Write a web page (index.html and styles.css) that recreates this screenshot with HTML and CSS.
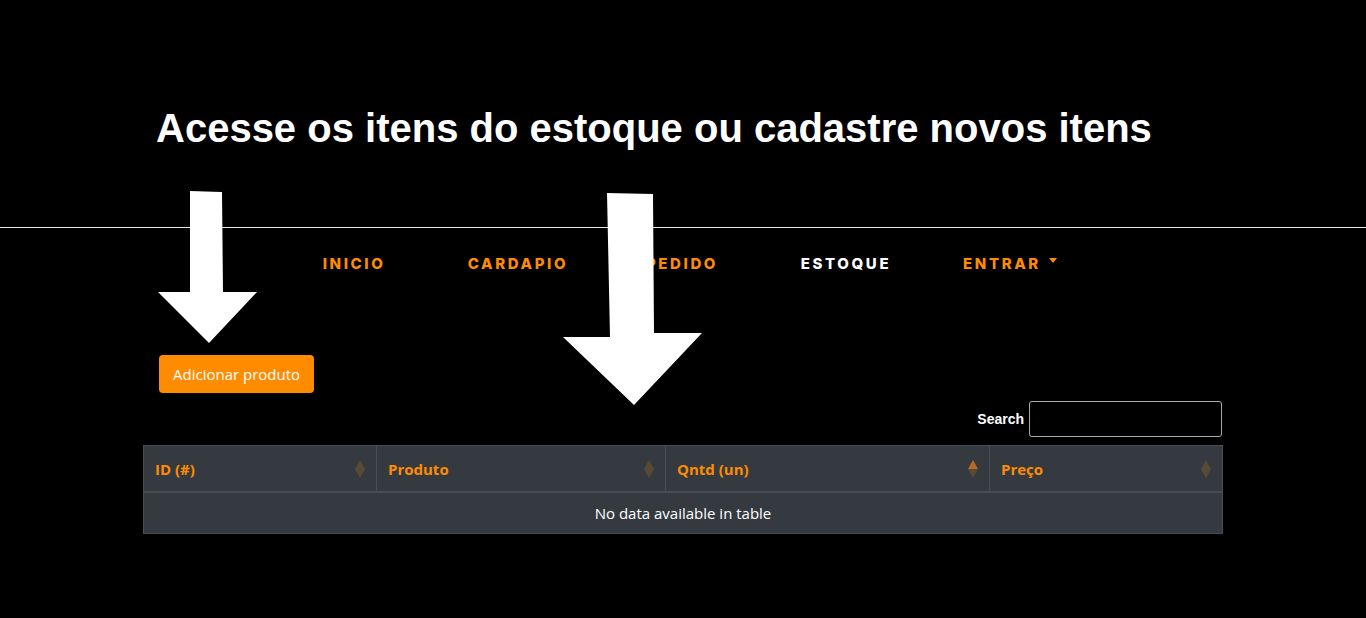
FILE: index.html
```html
<!DOCTYPE html>
<html lang="pt">
<head>
<meta charset="utf-8">
<title>Estoque</title>
<link rel="stylesheet" href="styles.css">
</head>
<body>
<header class="hero">
  <h1 class="hero-title">Acesse os itens do estoque ou cadastre novos itens</h1>
</header>
<nav class="nav">
  <a class="nav-link" href="#">INICIO</a>
  <a class="nav-link" href="#">CARDAPIO</a>
  <a class="nav-link" href="#">PEDIDO</a>
  <a class="nav-link active" href="#">ESTOQUE</a>
  <a class="nav-link dropdown" href="#">ENTRAR <span class="caret"></span></a>
</nav>
<main class="container">
  <div class="actions">
    <button class="btn-add" type="button">Adicionar produto</button>
  </div>
  <div class="search-row">
    <label class="search-label">Search <input class="search-input" type="search"></label>
  </div>
  <table class="table">
    <colgroup>
      <col class="c-id">
      <col class="c-prod">
      <col class="c-qtd">
      <col class="c-preco">
    </colgroup>
    <thead>
      <tr>
        <th>ID (#)<span class="sort"></span></th>
        <th>Produto<span class="sort"></span></th>
        <th>Qntd (un)<span class="sort asc"></span></th>
        <th>Preço<span class="sort"></span></th>
      </tr>
    </thead>
    <tbody>
      <tr><td colspan="4" class="empty">No data available in table</td></tr>
    </tbody>
  </table>
</main>
<svg class="overlay" width="1366" height="618" viewBox="0 0 1366 618" aria-hidden="true">
  <polygon fill="#fff" points="190,191 222,192 223,292 257,292 209,343 158,292 190,292"/>
  <polygon fill="#fff" points="607,193 653,194 654,333 702,333 634,405 563,337 610,337"/>
</svg>
</body>
</html>
```
FILE: styles.css
```css
html, body {
  margin: 0;
  padding: 0;
  background: #000;
}
body {
  position: relative;
  width: 1366px;
  height: 618px;
  overflow: hidden;
  font-family: "Open Sans", "Noto Sans", sans-serif;
  color: #fff;
}
.hero {
  height: 228px;
  border-bottom: 1px solid #e6e6e6;
  box-sizing: border-box;
  padding: 105px 0 0 156px;
}
.hero-title {
  margin: 0;
  font-family: "Liberation Sans", Arial, sans-serif;
  font-weight: 700;
  font-size: 40px;
  line-height: 46px;
  color: #fff;
}
.nav {
  display: flex;
  padding-left: 272px;
  height: 71px;
  align-items: center;
}
.nav-link {
  width: 164px;
  flex: none;
  font-family: "Inter", "Open Sans", sans-serif;
  font-weight: 800;
  font-size: 15px;
  letter-spacing: 2.6px;
  color: #ff8c00;
  text-decoration: none;
  display: flex;
  justify-content: center;
  align-items: center;
}
.nav-link.active {
  color: #fff;
}
.caret {
  display: inline-block;
  margin-left: 8px;
  width: 0;
  height: 0;
  border-left: 4.5px solid transparent;
  border-right: 4.5px solid transparent;
  border-top: 5px solid #ff8c00;
  transform: translateY(-3px);
}
.container {
  width: 1080px;
  margin: 0 auto;
}
.actions {
  padding: 56px 0 0 16px;
}
.btn-add {
  background: #ff8c00;
  color: #fff;
  border: 0;
  border-radius: 4px;
  height: 38px;
  padding: 0 14px;
  font-family: "Open Sans", "Noto Sans", sans-serif;
  font-size: 15px;
}
.search-row {
  display: flex;
  justify-content: flex-end;
  margin-top: 8px;
  height: 44px;
  padding-right: 1px;
}
.search-label {
  font-family: "Liberation Sans", Arial, sans-serif;
  font-weight: 700;
  font-size: 14px;
  display: flex;
  align-items: center;
  height: 36px;
}
.search-input {
  margin-left: 5px;
  width: 193px;
  height: 36px;
  box-sizing: border-box;
  border: 1px solid #aaa;
  border-radius: 3px;
  background: #000;
  color: #fff;
}
.table {
  width: 1079px;
  table-layout: fixed;
  border-collapse: collapse;
  background: #343a40;
  font-size: 15px;
}
.c-id { width: 233px; }
.c-prod { width: 289px; }
.c-qtd { width: 324px; }
.c-preco { width: 233px; }
.table th, .table td {
  border: 1px solid #454d55;
  padding: 0 11px;
}
.table th {
  position: relative;
  height: 45px;
  text-align: left;
  color: #ff8c00;
  font-weight: 700;
  border-bottom-width: 2px;
}
.table td.empty {
  height: 40px;
  text-align: center;
  color: #fff;
}
.sort {
  position: absolute;
  right: 10px;
  top: 14px;
  width: 11px;
  height: 18px;
}
.sort::before, .sort::after {
  content: "";
  position: absolute;
  left: 0;
  width: 0;
  height: 0;
  border-left: 5.5px solid transparent;
  border-right: 5.5px solid transparent;
}
.sort::before {
  top: 0;
  border-bottom: 9px solid #5a4a35;
}
.sort::after {
  top: 9px;
  border-top: 9px solid #5a4a35;
}
.sort.asc::before {
  border-bottom-color: #b86a22;
}
.overlay {
  position: absolute;
  top: 0;
  left: 0;
  pointer-events: none;
}
```
